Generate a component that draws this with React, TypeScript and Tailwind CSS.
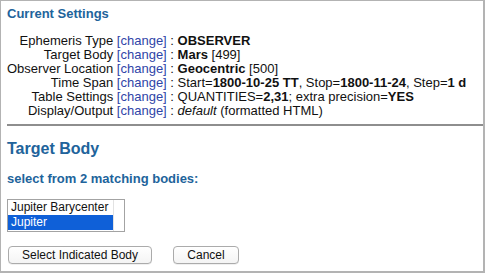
import React from 'react';

const rows: { label: string; value: React.ReactNode }[] = [
  { label: 'Ephemeris Type', value: <b>OBSERVER</b> },
  { label: 'Target Body', value: <><b>Mars</b> [499]</> },
  { label: 'Observer Location', value: <><b>Geocentric</b> [500]</> },
  {
    label: 'Time Span',
    value: (
      <>
        Start=<b>1800-10-25 TT</b>, Stop=<b>1800-11-24</b>, Step=<b>1 d</b>
      </>
    ),
  },
  {
    label: 'Table Settings',
    value: (
      <>
        QUANTITIES=<b>2,31</b>; extra precision=<b>YES</b>
      </>
    ),
  },
  { label: 'Display/Output', value: <><i>default</i> (formatted HTML)</> },
];

export default function App() {
  return (
    <div
      className="w-[485px] h-[273px] box-border bg-white border-t border-l border-r-2 border-b-2 border-[#b3b3b3] flex flex-col text-[#111]"
      style={{ fontFamily: '"Liberation Sans", Arial, Helvetica, sans-serif' }}
    >
      <div className="pl-[6px] pt-[5px]">
        <div className="text-[13px] leading-[15px] font-bold text-[#21639b]">Current Settings</div>
        <div className="mt-[13px] grid grid-cols-[auto_1fr] text-[13px] leading-[14px]">
          {rows.map((r) => (
            <React.Fragment key={r.label}>
              <div className="text-right whitespace-nowrap">
                {r.label} <span className="text-[#2f45a8]">[change]</span>
              </div>
              <div className="whitespace-nowrap">
                {'\u00a0: '}
                {r.value}
              </div>
            </React.Fragment>
          ))}
        </div>
      </div>
      <div className="ml-[6px] mt-[6px] h-[2px] bg-[#8e8e8e]" />
      <div className="pl-[6px]">
        <div className="mt-[14px] text-[16px] leading-[18px] font-bold text-[#21639b]">Target Body</div>
        <div className="mt-[13px] text-[13px] leading-[15px] font-bold text-[#21639b]">
          select from 2 matching bodies:
        </div>
        <div className="mt-[13px] w-[118px] h-[33px] box-border border border-[#a3a3a3] flex text-[12px] leading-[15px]">
          <div className="flex-1 flex flex-col">
            <div className="pl-[3px] h-[15px]">Jupiter Barycenter</div>
            <div className="pl-[3px] h-[15px] bg-[#0f60d8] text-white">Jupiter</div>
          </div>
          <div className="w-[11px] border-l border-[#e2e2e2] bg-white" />
        </div>
        <div className="mt-[14px] flex gap-[21px] pl-[1px]">
          <button className="w-[144px] h-[18px] box-border rounded-[4px] border border-[#ababab] bg-gradient-to-b from-white to-[#f4f4f4] text-[12px] leading-[16px] text-[#111] shadow-[0_0.5px_0.5px_rgba(0,0,0,0.12)]">
            Select Indicated Body
          </button>
          <button className="w-[66px] h-[18px] box-border rounded-[4px] border border-[#ababab] bg-gradient-to-b from-white to-[#f4f4f4] text-[12px] leading-[16px] text-[#111] shadow-[0_0.5px_0.5px_rgba(0,0,0,0.12)]">
            Cancel
          </button>
        </div>
      </div>
    </div>
  );
}
